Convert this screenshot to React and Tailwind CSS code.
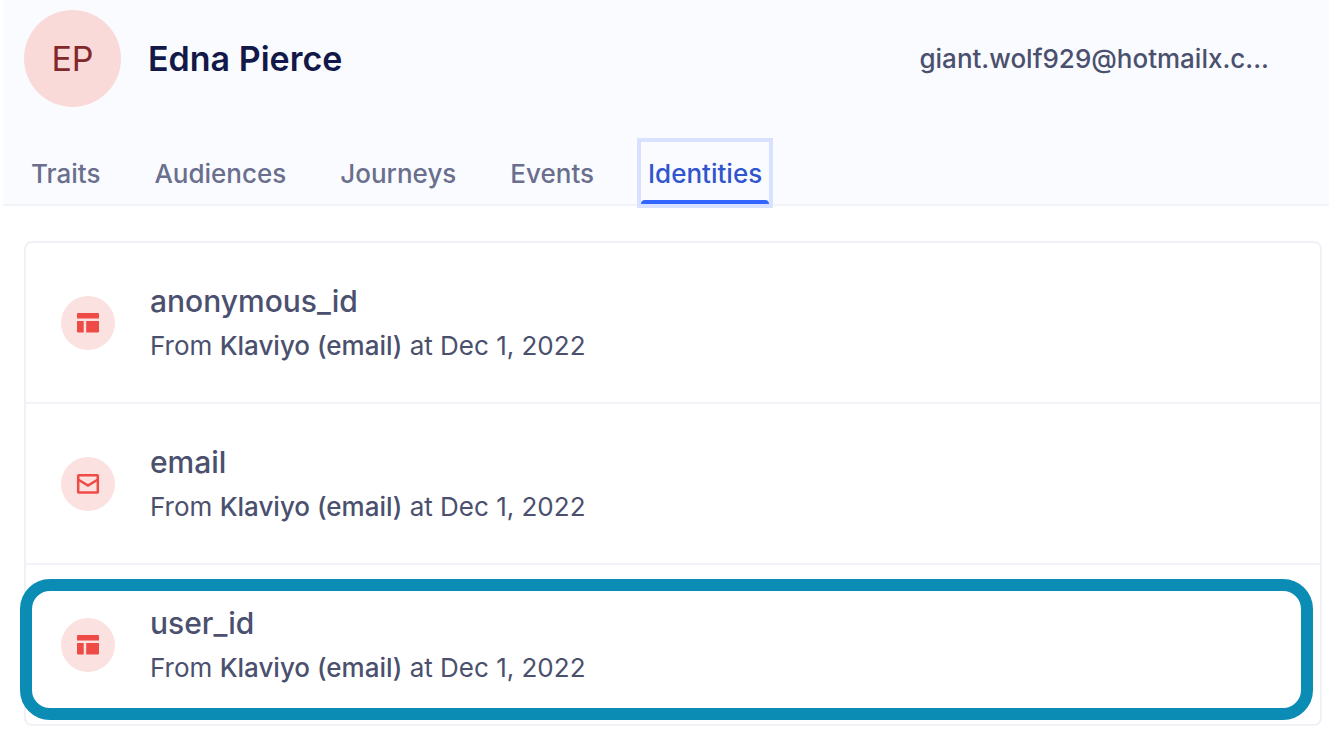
// src/components/ProfileIdentities.jsx

import { useState } from 'react';

const tabs = ['Traits', 'Audiences', 'Journeys', 'Events', 'Identities'];

const identities = [
  { name: 'anonymous_id', icon: 'layout', source: 'Klaviyo (email)', date: 'Dec 1, 2022' },
  { name: 'email', icon: 'mail', source: 'Klaviyo (email)', date: 'Dec 1, 2022' },
  { name: 'user_id', icon: 'layout', source: 'Klaviyo (email)', date: 'Dec 1, 2022', highlighted: true },
];

const LayoutIcon = () => (
  <svg width="24" height="22" viewBox="0 0 24 22" fill="#ee4b47" aria-hidden="true">
    <path d="M2.3 1h19.4A1.3 1.3 0 0 1 23 2.3v4.2H1V2.3A1.3 1.3 0 0 1 2.3 1Z" />
    <path d="M1 9h6.7v11.5H2.2A1.2 1.2 0 0 1 1 19.3Z" />
    <path d="M10.2 9H23v10.3a1.2 1.2 0 0 1-1.2 1.2H10.2Z" />
  </svg>
);

const MailIcon = () => (
  <svg width="24" height="22" viewBox="0 0 24 22" fill="none" stroke="#ee4b47" strokeWidth="2.5" aria-hidden="true">
    <rect x="2.2" y="2.2" width="19.6" height="17.4" rx="0.5" />
    <path d="M2.5 6.8l9.5 5.7 9.5-5.7" />
  </svg>
);

const IdentityRow = ({ identity }) => (
  <li className="relative box-content flex h-[159px] items-center">
    <div className="ml-[35px] flex h-[54px] w-[54px] shrink-0 items-center justify-center rounded-full bg-[#fbe1e0]">
      {identity.icon === 'mail' ? <MailIcon /> : <LayoutIcon />}
    </div>
    <div className="ml-[35px] text-[#4a506e]">
      <h2 className="text-[30px] leading-[46px] font-medium">{identity.name}</h2>
      <p className="text-[26px] leading-[44px]">
        From <span className="font-medium">{identity.source}</span> at {identity.date}
      </p>
    </div>

    {/* Highlight ring */}
    {identity.highlighted && (
      <div className="pointer-events-none absolute top-[14px] right-[7px] bottom-1 -left-[6px] rounded-[30px] border-12 border-[#0a8cb4]"></div>
    )}
  </li>
);

const ProfileIdentities = () => {
  const [selectedTab, setSelectedTab] = useState('Identities');

  return (
    <div className="min-h-screen bg-white font-['Inter',sans-serif]">
      {/* Profile header */}
      <header className="ml-[3px] border-b-2 border-[#f2f3f8] bg-[#fafbff] pt-[10px] pl-[21px]">
        <div className="flex items-center pr-[60px]">
          <div className="flex h-[97px] w-[97px] items-center justify-center rounded-full bg-[#f9dad9] text-[34px] text-[#82272a]">
            EP
          </div>
          <h1 className="ml-[27px] text-[34px] font-semibold text-[#121848]">Edna Pierce</h1>
          <p className="ml-auto text-[26px] font-medium text-[#4a506e]">giant.wolf929@hotmailx.c...</p>
        </div>

        {/* Tabs */}
        <nav className="mt-[35px] flex gap-10">
          {tabs.map((tab) => (
            <button
              key={tab}
              onClick={() => setSelectedTab(tab)}
              className={`relative h-[62px] px-[7px] text-[26px] font-medium ${
                selectedTab === tab
                  ? 'text-[#3055cd] ring-4 ring-[#d8e1ff]'
                  : 'text-[#696f8c]'
              }`}
            >
              {tab}
              {selectedTab === tab && (
                <span className="absolute inset-x-0 bottom-0 h-1 rounded-t-sm bg-[#3366ff]"></span>
              )}
            </button>
          ))}
        </nav>
      </header>

      {/* Identity list */}
      <main className="pt-[35px] pr-[7px] pl-6">
        <ul className="divide-y-2 divide-[#f2f2f8] rounded-lg border-2 border-[#f0f0f7]">
          {identities.map((identity) => (
            <IdentityRow key={identity.name} identity={identity} />
          ))}
        </ul>
      </main>
    </div>
  );
};

export default ProfileIdentities;
